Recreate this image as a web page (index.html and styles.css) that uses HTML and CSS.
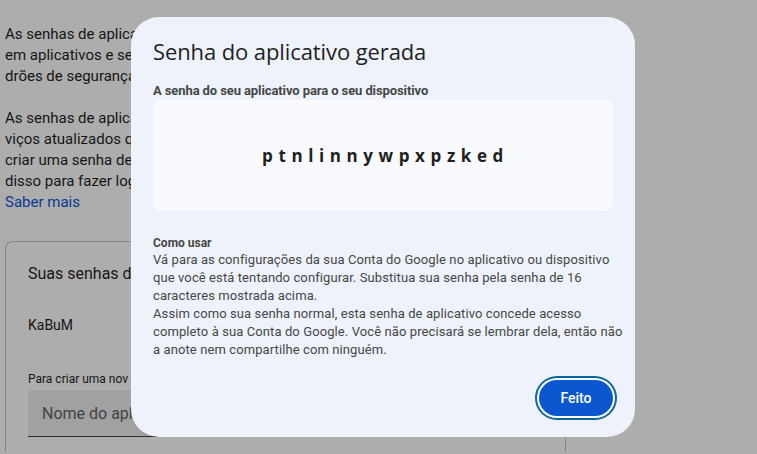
FILE: index.html
```html
<!DOCTYPE html>
<html lang="pt-BR">
<head>
<meta charset="utf-8">
<title>Senhas de app</title>
<link rel="stylesheet" href="styles.css">
</head>
<body>
<main class="page">
  <div class="para">
    <div class="line">As senhas de aplica</div>
    <div class="line">em aplicativos e ser</div>
    <div class="line">drões de segurança</div>
  </div>
  <div class="para para-2">
    <div class="line">As senhas de aplica</div>
    <div class="line">viços atualizados qu</div>
    <div class="line">criar uma senha de</div>
    <div class="line">disso para fazer log</div>
    <div class="line"><a class="link" href="#">Saber mais</a></div>
  </div>
  <section class="card">
    <div class="card-title">Suas senhas de</div>
    <div class="app-name">KaBuM</div>
    <div class="field-label">Para criar uma nov</div>
    <div class="field"><span class="placeholder">Nome do aplic</span></div>
  </section>
</main>

<div class="scrim">
  <div class="dialog" role="dialog">
    <h1 class="dlg-title">Senha do aplicativo gerada</h1>
    <div class="dlg-sub">A senha do seu aplicativo para o seu dispositivo</div>
    <div class="pw-box"><span class="pw">ptnlinnywpxpzked</span></div>
    <div class="howto">
      <div class="howto-title">Como usar</div>
      <p class="howto-text">Vá para as configurações da sua Conta do Google no aplicativo ou dispositivo<br>que você está tentando configurar. Substitua sua senha pela senha de 16<br>caracteres mostrada acima.<br>Assim como sua senha normal, esta senha de aplicativo concede acesso<br>completo à sua Conta do Google. Você não precisará se lembrar dela, então não<br>a anote nem compartilhe com ninguém.</p>
    </div>
    <div class="actions">
      <button class="btn">Feito</button>
    </div>
  </div>
</div>
</body>
</html>
```

FILE: styles.css
```css
* { box-sizing: border-box; }
html, body { margin: 0; padding: 0; }
body {
  font-family: Roboto, "Noto Sans", Arial, sans-serif;
  color: #1f1f1f;
  background: #ffffff;
  width: 757px;
  height: 454px;
  overflow: hidden;
}
.page {
  padding: 24px 0 0 5px;
  width: 566px;
}
.para {
  font-size: 15px;
  line-height: 21px;
  margin-bottom: 21px;
}
.para-2 { margin-bottom: 0; }
.line { white-space: nowrap; }
.link { color: #0b57d0; text-decoration: none; }
.card {
  margin-top: 28px;
  border: 1px solid #c4c7c5;
  border-bottom: none;
  border-radius: 8px 8px 0 0;
  padding: 20px 22px 0 22px;
  height: 211px;
}
.card-title {
  font-size: 16px;
  line-height: 24px;
  white-space: nowrap;
}
.app-name {
  margin-top: 29px;
  font-size: 14px;
  line-height: 20px;
}
.field-label {
  margin-top: 36px;
  font-size: 12px;
  line-height: 16px;
  white-space: nowrap;
}
.field {
  margin-top: 3px;
  height: 47px;
  background: #eeeeee;
  border-bottom: 1px solid #444746;
  border-radius: 4px 4px 0 0;
  display: flex;
  align-items: center;
  padding-left: 14px;
}
.placeholder {
  font-size: 16px;
  color: #5f6368;
  white-space: nowrap;
}

.scrim {
  position: fixed;
  inset: 0;
  background: rgba(0, 0, 0, 0.32);
  display: flex;
  align-items: center;
  justify-content: center;
  padding-left: 9px;
}
.dialog {
  width: 504px;
  height: 420px;
  background: #eef3fb;
  border-radius: 28px;
  padding: 19px 22px 0 22px;
  display: flex;
  flex-direction: column;
}
.dlg-title {
  margin: 0;
  font-family: "Open Sans", Roboto, sans-serif;
  font-weight: 400;
  font-size: 22px;
  line-height: 30px;
  color: #1f1f1f;
  letter-spacing: -0.1px;
}
.dlg-sub {
  margin-top: 17px;
  font-size: 13px;
  font-weight: 700;
  line-height: 16px;
  color: #444746;
  letter-spacing: -0.1px;
}
.pw-box {
  margin-top: 1px;
  height: 111px;
  background: #f8fafd;
  border-radius: 8px;
  display: flex;
  align-items: center;
  justify-content: center;
}
.pw {
  font-family: "Open Sans", Roboto, sans-serif;
  font-weight: 700;
  font-size: 17px;
  letter-spacing: 5.6px;
  color: #1f1f1f;
  margin-right: -5px;
}
.howto { margin-top: 24px; color: #444746; }
.howto-title {
  font-size: 12px;
  font-weight: 700;
  line-height: 16px;
}
.howto-text {
  margin: 0;
  font-size: 13px;
  line-height: 18px;
  letter-spacing: 0.1px;
  white-space: nowrap;
}
.actions {
  margin-top: auto;
  margin-bottom: 21px;
  display: flex;
  justify-content: flex-end;
}
.btn {
  height: 36px;
  width: 74px;
  border: none;
  border-radius: 18px;
  background: #0b57d0;
  color: #ffffff;
  font-family: Roboto, sans-serif;
  font-size: 14px;
  font-weight: 500;
  box-shadow: 0 0 0 2px #ffffff, 0 0 0 4px #0b6699;
}
```
